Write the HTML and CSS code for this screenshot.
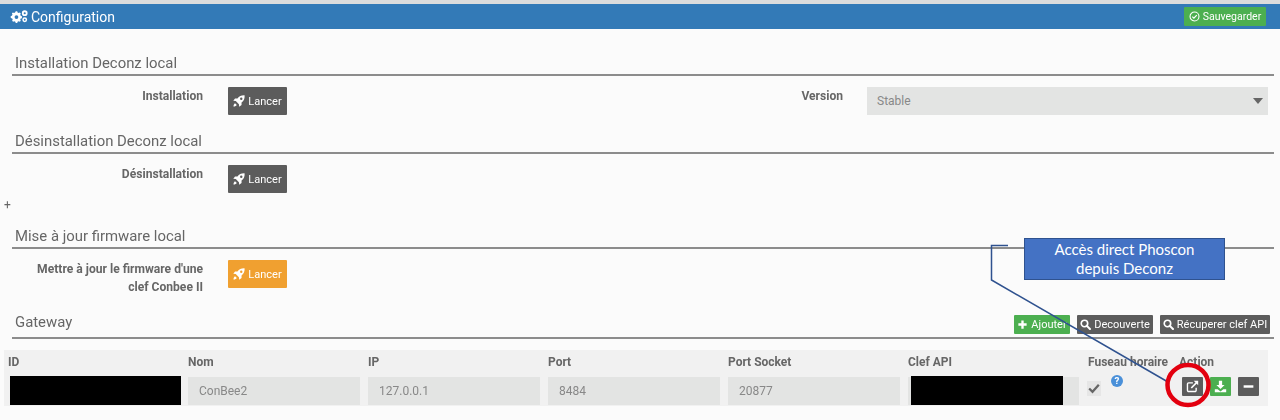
FILE: index.html
```html
<!DOCTYPE html>
<html lang="fr">
<head>
<meta charset="utf-8">
<title>Configuration</title>
<link rel="stylesheet" href="styles.css">
</head>
<body>
<svg width="0" height="0" class="defs">
  <symbol id="rocket" viewBox="0 0 16 16"><path d="M15.500.5c-4.300-.2-7.200 1.100-9.600 4.100H2.700L.4 7.700l3.300.4 4.200 4.200.4 3.300 3.100-2.300v-3.200c3-2.400 4.300-5.300 4.100-9.600zM11 3.400a1.600 1.600 0 1 1 0 3.200 1.600 1.600 0 0 1 0-3.200zM2.700 10.900c-1.200.6-1.900 2-2.100 4.500 2.500-.2 3.900-.9 4.500-2.100z" fill="currentColor"/></symbol>
  <symbol id="search" viewBox="0 0 16 16"><circle cx="6.500" cy="6.500" r="4.700" fill="none" stroke="currentColor" stroke-width="2.400"/><path d="M10 10l4.500 4.500" stroke="currentColor" stroke-width="3" stroke-linecap="round"/></symbol>
</svg>

<header class="topbar">
  <h1 class="title">
    <svg class="cogs" viewBox="0 0 22 16"><path d="M7 1.500l1.800.2.500 1.500 1.300.6 1.400-.7 1.200 1.300-.7 1.400.6 1.300 1.500.5v2.400l-1.500.5-.6 1.300.7 1.400-1.200 1.300-1.400-.7-1.300.6-.5 1.500H7l-.5-1.500-1.300-.6-1.400.7-1.200-1.300.7-1.400-.6-1.300L.9 9.900V7.500l1.500-.5.6-1.300-.7-1.400 1.200-1.300 1.400.7 1.300-.6zM7.900 6.400a2.300 2.300 0 1 0 0 4.600 2.300 2.300 0 0 0 0-4.600z" fill="currentColor" fill-rule="evenodd"/><path d="M18 .5a3.500 3.500 0 1 0 0 7 3.500 3.500 0 0 0 0-7zm0 2.200a1.300 1.300 0 1 1 0 2.600 1.300 1.300 0 0 1 0-2.600zM18 9a3 3 0 1 0 0 6 3 3 0 0 0 0-6zm0 1.900a1.100 1.100 0 1 1 0 2.200 1.100 1.100 0 0 1 0-2.200z" fill="currentColor" fill-rule="evenodd"/></svg>
    Configuration
  </h1>
  <button class="btn btn-green btn-save">
    <svg class="ico" viewBox="0 0 16 16"><circle cx="8" cy="8" r="6.500" fill="none" stroke="currentColor" stroke-width="1.600"/><path d="M4.800 8.200l2.300 2.300 4.200-4.400" fill="none" stroke="currentColor" stroke-width="1.800"/></svg>
    Sauvegarder
  </button>
</header>

<main class="content">
  <h2 class="legend">Installation Deconz local</h2>
  <div class="row">
    <label class="label">Installation</label>
    <button class="btn btn-dark btn-run"><svg class="ico ico-rocket"><use href="#rocket"/></svg>Lancer</button>
    <label class="label">Version</label>
    <div class="select">Stable<span class="caret"></span></div>
  </div>

  <h2 class="legend legend-next">Désinstallation Deconz local</h2>
  <div class="row">
    <label class="label">Désinstallation</label>
    <button class="btn btn-dark btn-run"><svg class="ico ico-rocket"><use href="#rocket"/></svg>Lancer</button>
  </div>

  <div class="plus">+</div>

  <h2 class="legend">Mise à jour firmware local</h2>
  <div class="row">
    <label class="label label-wrap">Mettre à jour le firmware d'une clef Conbee II</label>
    <button class="btn btn-orange btn-run"><svg class="ico ico-rocket"><use href="#rocket"/></svg>Lancer</button>
  </div>

  <div class="legend legend-gateway">
    <h2 class="gateway-title">Gateway</h2>
    <div class="gateway-actions">
      <button class="btn btn-green btn-small btn-add"><svg class="ico" viewBox="0 0 16 16"><path d="M8 2v12M2 8h12" stroke="currentColor" stroke-width="3.400"/></svg>Ajouter</button>
      <button class="btn btn-dark btn-small btn-discover"><svg class="ico"><use href="#search"/></svg>Decouverte</button>
      <button class="btn btn-dark btn-small btn-key"><svg class="ico"><use href="#search"/></svg>Récuperer clef API</button>
    </div>
  </div>

  <div class="table">
    <div class="th">ID</div>
    <div class="th">Nom</div>
    <div class="th">IP</div>
    <div class="th">Port</div>
    <div class="th">Port Socket</div>
    <div class="th">Clef API</div>
    <div class="th">Fuseau horaire</div>
    <div class="th">Action</div>

    <div class="redacted"></div>
    <div class="field">ConBee2</div>
    <div class="field">127.0.0.1</div>
    <div class="field">8484</div>
    <div class="field">20877</div>
    <div class="field field-key"><span class="redacted-key"></span></div>
    <div class="tz">
      <span class="check"><svg viewBox="0 0 16 16"><path d="M2.500 8.500l3.800 3.800 7.200-8" fill="none" stroke="currentColor" stroke-width="2.600"/></svg></span>
      <svg class="help" viewBox="0 0 16 16"><circle cx="8" cy="8" r="8" fill="#4a90d9"/><text x="8" y="12.500" text-anchor="middle" class="help-q">?</text></svg>
    </div>
    <div class="actions">
      <button class="btn btn-dark btn-icon"><svg class="ico-lg" viewBox="0 0 16 16"><path d="M12.500 9.500v3.200a1.500 1.500 0 0 1-1.500 1.500H3.300a1.500 1.500 0 0 1-1.500-1.500V5a1.500 1.500 0 0 1 1.500-1.500H8.500" fill="none" stroke="currentColor" stroke-width="1.700"/><path d="M6.500 9.800L13 3.200" stroke="currentColor" stroke-width="2"/><path d="M9.500 1h5.500v5.500z" fill="currentColor"/></svg></button>
      <button class="btn btn-green btn-icon"><svg class="ico-lg" viewBox="0 0 16 16"><path d="M6 1h4v5h3l-5 5-5-5h3zM1 11.500h3.500L8 14l3.500-2.500H15V15H1z" fill="currentColor"/></svg></button>
      <button class="btn btn-dark btn-icon"><svg class="ico-lg" viewBox="0 0 16 16"><path d="M2 8h12" stroke="currentColor" stroke-width="3"/></svg></button>
    </div>
  </div>
</main>

<div class="callout">Accès direct Phoscon<br>depuis Deconz</div>
<svg class="annotation" viewBox="0 0 1280 420">
  <path d="M1008 245.500H991.500V280L1168 382" fill="none" stroke="#2f528f" stroke-width="1.500"/>
  <ellipse cx="1188" cy="385" rx="20.500" ry="20" fill="none" stroke="#e3000f" stroke-width="4.500"/>
</svg>
</body>
</html>
```
FILE: styles.css
```css
* { box-sizing: border-box; }
html, body { margin: 0; height: 420px; overflow: hidden; }
body {
  position: relative;
  background: #fbfbfb;
  color: #666;
  font-family: Roboto, "Liberation Sans", sans-serif;
  font-size: 12px;
  filter: blur(0.35px);
}
.defs { position: absolute; }

.topbar {
  height: 29px;
  border-top: 4px solid #dcdcdc;
  background: #337ab7;
  color: #fff;
  display: flex;
  align-items: center;
  justify-content: space-between;
  padding: 0 14px 0 10px;
}
.title { margin: 0; font-size: 14px; font-weight: 400; display: flex; align-items: center; gap: 3px; }
.cogs { width: 18px; height: 15px; }

.btn {
  border: 0;
  border-radius: 1px;
  color: #fff;
  font-family: inherit;
  font-size: 11px;
  white-space: nowrap;
  display: inline-flex;
  align-items: center;
  justify-content: center;
  gap: 3px;
  padding: 0;
}
.ico { width: 11px; height: 11px; flex: none; }
.ico-rocket { width: 12px; height: 12px; }
.ico-lg { width: 13px; height: 13px; }
.btn-green { background: #4caf50; }
.btn-dark { background: #5c5c5c; }
.btn-orange { background: #f0a030; }
.btn-save { width: 82px; height: 19px; font-size: 10.500px; }
.btn-run { width: 59px; height: 28px; margin-left: 25px; }
.btn-small { height: 19px; }
.btn-add { width: 56px; }
.btn-discover { width: 76px; }
.btn-key { width: 110px; }
.btn-icon { width: 21px; height: 19px; }

.content { padding: 24px 6px 0 12px; }
.legend {
  margin: 0;
  height: 23px;
  padding: 0 3px;
  border-bottom: 2px solid #8c8c8c;
  font-size: 14.900px;
  font-weight: 400;
  line-height: 20px;
  color: #666;
}
.legend-next { margin-top: 16px; }

.row {
  display: grid;
  grid-template-columns: 191px 84px 556px 425px;
  margin-top: 11px;
  min-height: 28px;
  align-items: start;
}
.label {
  font-weight: 700;
  font-size: 12.100px;
  line-height: 18px;
  text-align: right;
  color: #666;
}
.label-wrap { padding-left: 20px; }
.select {
  position: relative;
  height: 28px;
  margin-left: 24px;
  padding-left: 10px;
  background: #e3e4e3;
  color: #888;
  line-height: 28px;
}
.caret {
  position: absolute;
  right: 5px;
  top: 11px;
  border: 5px solid transparent;
  border-top: 6px solid #666;
  border-bottom: 0;
}
.plus { height: 33px; margin-left: -8px; padding-top: 5px; line-height: 14px; font-size: 12px; }

.legend-gateway {
  height: 27px;
  margin-top: 16px;
  padding-right: 4px;
  display: flex;
  justify-content: space-between;
}
.gateway-title { margin: 0; font-size: 14.900px; font-weight: 400; line-height: 20px; }
.gateway-actions { display: flex; gap: 7px; margin-top: 3px; height: 19px; }

.table {
  width: 1264px;
  height: 56px;
  margin: 11px 0 0 -8px;
  padding-left: 4px;
  background: #f1f1f1;
  display: grid;
  grid-template-columns: 180px 180px 180px 180px 180px 180px 91px 93px;
  grid-template-rows: 26px 30px;
}
.th { font-weight: 700; font-size: 12px; line-height: 25px; color: #666; }
.redacted { width: 171px; height: 29px; margin-left: 2px; background: #000; }
.field {
  width: 172px;
  height: 28px;
  margin-top: 1px;
  padding-left: 11px;
  background: #e3e4e3;
  color: #888;
  line-height: 28px;
}
.field-key { width: 171px; padding: 0; }
.redacted-key { display: block; width: 152px; height: 29px; margin: -1px 0 0 3px; background: #000; }
.tz { display: flex; align-items: flex-start; }
.check {
  display: flex;
  width: 14px;
  height: 15px;
  margin: 5px 0 0 -1px;
  background: #e6e6e6;
  color: #666;
}
.check svg { width: 14px; height: 14px; }
.help { width: 12px; height: 12px; margin: -1px 0 0 10px; }
.help-q { fill: #fff; font-size: 13px; font-weight: 700; font-family: Roboto, sans-serif; }
.actions { display: flex; gap: 7px; margin-left: 3px; padding-top: 1px; }

.callout {
  position: absolute;
  left: 1024px;
  top: 238px;
  width: 201px;
  height: 42px;
  padding-top: 1px;
  background: #4472c4;
  border: 1px solid #2f528f;
  color: #fff;
  text-align: center;
  font-family: Lato, "Open Sans", sans-serif;
  font-size: 15px;
  line-height: 19px;
}
.annotation { position: absolute; left: 0; top: 0; width: 1280px; height: 420px; pointer-events: none; }
```
